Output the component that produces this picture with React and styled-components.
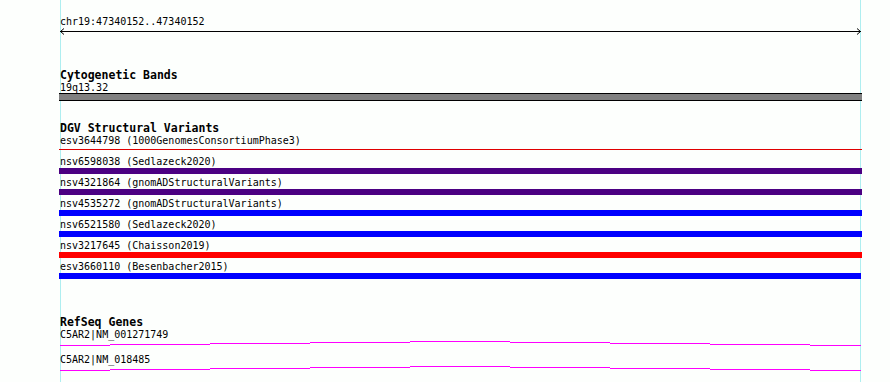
import React from "react";
import styled, { createGlobalStyle } from "styled-components";

const GlobalStyle = createGlobalStyle`
	html, body {
		margin: 0;
		padding: 0;
		background: #fdfffd;
	}
	body {
		font-family: "DejaVu Sans Mono", "Liberation Mono", monospace;
		color: #000;
	}
`;

const guide = "#aeeef0";

const variants = [
	{ name: "esv3644798 (1000GenomesConsortiumPhase3)", color: "#e00000", thin: true },
	{ name: "nsv6598038 (Sedlazeck2020)", color: "#4b0082" },
	{ name: "nsv4321864 (gnomADStructuralVariants)", color: "#4b0082" },
	{ name: "nsv4535272 (gnomADStructuralVariants)", color: "#0000ff" },
	{ name: "nsv6521580 (Sedlazeck2020)", color: "#0000ff" },
	{ name: "nsv3217645 (Chaisson2019)", color: "#ff0000" },
	{ name: "esv3660110 (Besenbacher2015)", color: "#0000ff", short: true },
];

const genes = ["C5AR2|NM_001271749", "C5AR2|NM_018485"];

// exon-ish steps of the transcript line, one level per 100px
const waveLevels = [5, 4, 3, 2, 1, 2, 3, 4, 5];

const Wave = () => {
	const parts = [];
	let x = 1;
	waveLevels.forEach((lvl, i) => {
		const end = i === 0 ? 51 : Math.min(x + 100, 802);
		parts.push(<rect key={i} x={x} y={lvl} width={end - x} height={1} fill="#ff00ff" />);
		x = end;
	});
	return (
		<WaveSvg width="803" height="13" viewBox="0 0 803 13" shapeRendering="crispEdges">
			{parts}
		</WaveSvg>
	);
};

const App = () => {
	return (
		<>
			<GlobalStyle />
			<Board>
				<Ruler>
					<Label>chr19:47340152..47340152</Label>
					<RulerSvg width="803" height="7" viewBox="0 0 803 7">
						<line x1="1" y1="3.5" x2="802" y2="3.5" stroke="#000" strokeWidth="1" />
						<polyline points="5,0.5 1.5,3.5 5,6.5" fill="none" stroke="#000" strokeWidth="1" />
						<polyline points="798,0.5 801.5,3.5 798,6.5" fill="none" stroke="#000" strokeWidth="1" />
					</RulerSvg>
				</Ruler>

				<Track $top={33}>
					<Title>Cytogenetic Bands</Title>
					<Label>19q13.32</Label>
					<BandBar />
				</Track>

				<Track $top={20}>
					<Title>DGV Structural Variants</Title>
					{variants.map((v) => (
						<VariantRow key={v.name}>
							<Label>{v.name}</Label>
							<BarSlot>
								<FeatureBar $color={v.color} $thin={v.thin} $short={v.short} />
							</BarSlot>
						</VariantRow>
					))}
				</Track>

				<Track $top={34}>
					<Title>RefSeq Genes</Title>
					{genes.map((g) => (
						<GeneRow key={g}>
							<Label>{g}</Label>
							<Wave />
						</GeneRow>
					))}
				</Track>
			</Board>
		</>
	);
};

export default App;

// css
const Board = styled.div`
	margin-left: 59px;
	width: 803px;
	min-height: 100vh;
	background:
		linear-gradient(${guide}, ${guide}) 1px 0 / 1px 100% no-repeat,
		linear-gradient(${guide}, ${guide}) 801px 0 / 1px 100% no-repeat;
`;

const Ruler = styled.div`
	padding-top: 15px;
	display: flex;
	flex-direction: column;
`;

const RulerSvg = styled.svg`
	display: block;
	margin-top: 1px;
`;

const Track = styled.section`
	margin-top: ${(p) => p.$top}px;
	display: flex;
	flex-direction: column;
`;

const Title = styled.div`
	height: 13px;
	line-height: 15px;
	padding-left: 1px;
	font-size: 11.5px;
	font-weight: bold;
	white-space: nowrap;
`;

const Label = styled.div`
	height: 12px;
	line-height: 14px;
	padding-left: 1px;
	font-size: 10px;
	white-space: nowrap;
`;

const BandBar = styled.div`
	height: 6px;
	background: #808080;
	border-top: 1px solid #000;
	border-bottom: 1px solid #000;
`;

const VariantRow = styled.div`
	height: 21px;
	display: flex;
	flex-direction: column;
`;

const BarSlot = styled.div`
	margin-top: 1px;
	height: 6px;
`;

const FeatureBar = styled.div`
	height: ${(p) => (p.$thin ? 1 : 6)}px;
	margin-top: ${(p) => (p.$thin ? 2 : 0)}px;
	width: ${(p) => (p.$short ? 802 : 803)}px;
	background: ${(p) => p.$color};
`;

const GeneRow = styled.div`
	height: 25px;
	display: flex;
	flex-direction: column;
`;

const WaveSvg = styled.svg`
	display: block;
`;
